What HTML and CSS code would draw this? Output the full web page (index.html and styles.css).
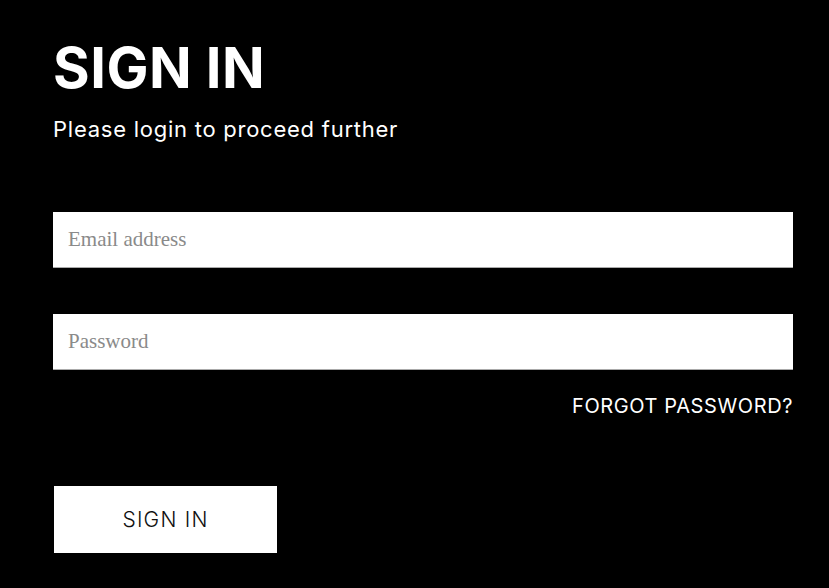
FILE: index.html
```html
<!DOCTYPE html>
<html lang="en">
<head>
    <meta charset="UTF-8">
    <meta name="viewport" content="width=device-width, initial-scale=1.0">
    <title>Sign In</title>
    <link rel="stylesheet" href="styles.css">
</head>
<body>
    <main class="login">
        <h1 class="login-title">SIGN IN</h1>
        <p class="login-subtitle">Please login to proceed further</p>

        <form class="login-form" onsubmit="return false">
            <input class="login-input" type="email" placeholder="Email address">
            <input class="login-input" type="password" placeholder="Password">
            <div class="forgot-row">
                <a class="forgot-link" href="#">FORGOT PASSWORD?</a>
            </div>
            <button class="login-button" type="submit">SIGN IN</button>
        </form>
    </main>
</body>
</html>
```

FILE: styles.css
```css
body {
    margin: 0;
    background: #000;
    color: #fff;
    font-family: 'Inter', 'Noto Sans', sans-serif;
}
.login {
    padding: 38px 36px 0 53px;
}
.login-title {
    margin: 0;
    font-size: 56px;
    font-weight: 700;
    line-height: 60px;
    letter-spacing: 0.5px;
}
.login-subtitle {
    margin: 18px 0 0;
    font-size: 22px;
    font-weight: 400;
    line-height: 26px;
    letter-spacing: 0.75px;
}
.login-form {
    display: flex;
    flex-direction: column;
    margin-top: 70px;
}
.login-input {
    box-sizing: border-box;
    height: 56px;
    margin: 0 0 46px;
    padding: 0 15px;
    border: none;
    border-bottom: 1px solid #aaa;
    background: #fff;
    font-family: 'Liberation Serif', serif;
    font-size: 21px;
    color: #333;
    outline: none;
}
.login-input::placeholder {
    color: #8a8a8a;
}
.login-input + .login-input {
    margin-bottom: 24px;
}
.forgot-row {
    display: flex;
    justify-content: flex-end;
}
.forgot-link {
    color: #fff;
    text-decoration: none;
    font-size: 20px;
    line-height: 24px;
    letter-spacing: 0.6px;
}
.login-button {
    align-self: flex-start;
    width: 223px;
    height: 67px;
    margin: 68px 0 0 1px;
    border: none;
    background: #fff;
    color: #111;
    font-family: 'Inter', 'Noto Sans', sans-serif;
    font-size: 21px;
    font-weight: 300;
    letter-spacing: 1.2px;
    cursor: pointer;
}
```
